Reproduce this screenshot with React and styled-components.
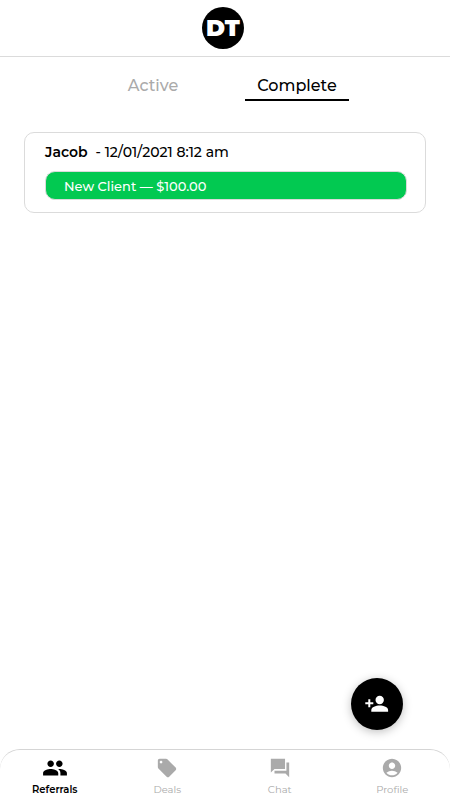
import React, { useState } from "react";
import styled, { createGlobalStyle } from "styled-components";
import { MdPeople, MdLocalOffer, MdAccountCircle } from "react-icons/md";

const GlobalStyle = createGlobalStyle`
  *, *::before, *::after { box-sizing: border-box; }
  body {
    margin: 0;
    background: #fff;
    color: #000;
    font-family: Montserrat, Inter, "Liberation Sans", sans-serif;
  }
  button { font: inherit; cursor: pointer; }
`;

const Screen = styled.div`
  display: flex;
  flex-direction: column;
  min-height: 100vh;
`;

const Header = styled.header`
  display: flex;
  justify-content: center;
  padding: 7px 0;
  border-bottom: 1px solid #dbdbdb;
`;

const Logo = styled.div`
  display: flex;
  align-items: center;
  justify-content: center;
  width: 42px;
  height: 42px;
  margin-right: 4px;
  border-radius: 50%;
  background: #000;
  color: #fff;
  font-size: 23px;
  font-weight: 900;
  line-height: 24px;
`;

const Tabs = styled.div`
  display: flex;
  justify-content: center;
  gap: 40px;
  padding-top: 14px;
`;

const Tab = styled.button`
  width: 104px;
  height: 30px;
  padding: 2px 0 0;
  border: 0;
  border-bottom: 2px solid ${({ $active }) => ($active ? "#000" : "transparent")};
  background: none;
  color: ${({ $active }) => ($active ? "#000" : "#aaa")};
  font-size: 16px;
  font-weight: 500;
  line-height: 26px;
`;

const List = styled.main`
  flex: 1;
  padding: 31px 24px 24px;
`;

const Card = styled.article`
  padding: 9px 18px 12px 20px;
  border: 1px solid #dbdbdb;
  border-radius: 10px;
`;

const CardTitle = styled.div`
  display: flex;
  gap: 8px;
  margin-bottom: 9px;
  font-size: 14px;
  font-weight: 500;
  line-height: 20px;
`;

const Name = styled.strong`
  font-weight: 600;
`;

const Status = styled.div`
  padding: 1px 18px 0;
  border: 1px solid #dbdbdb;
  border-radius: 10px;
  background: #02c951;
  color: #fff;
  font-size: 13px;
  font-weight: 500;
  line-height: 26px;
`;

const AddButton = styled.button`
  position: fixed;
  right: 47px;
  bottom: 70px;
  display: flex;
  align-items: center;
  justify-content: center;
  width: 52px;
  height: 52px;
  padding: 0;
  border: 0;
  border-radius: 50%;
  background: #000;
  color: #fff;
  font-size: 24px;
  box-shadow: 0 2px 10px rgba(0, 0, 0, 0.25);
`;

const BottomNav = styled.nav`
  position: sticky;
  bottom: 0;
  display: grid;
  grid-template-columns: repeat(4, 1fr);
  height: 51px;
  padding-top: 5px;
  border-top: 1px solid #d5d5d5;
  border-radius: 20px 20px 0 0;
  background: #fff;
`;

const NavItem = styled.a`
  display: flex;
  flex-direction: column;
  align-items: center;
  gap: 4px;
  padding-right: 3px;
  color: ${({ $active }) => ($active ? "#000" : "#aaa")};
  text-decoration: none;
`;

const NavIcon = styled.span`
  display: flex;
  align-items: center;
  height: 25px;
  font-size: ${({ $size }) => $size}px;
`;

const NavLabel = styled.span`
  font-size: 10px;
  line-height: 12px;
  font-weight: ${({ $active }) => ($active ? 600 : 400)};
`;

const ChatIcon = () => (
  <svg viewBox="0 0 24 24" width="1em" height="1em" fill="currentColor" aria-hidden="true">
    <path d="M2 2h15.5v11H6l-4 4z" />
    <path d="M19 6h3v16l-4-4H6v-3h13z" />
  </svg>
);

const PersonAddIcon = () => (
  <svg viewBox="0 0 24 24" width="1em" height="1em" fill="currentColor" aria-hidden="true">
    <path d="M3.3 7.2h2v3h3v2h-3v3h-2v-3h-3v-2h3z" />
    <circle cx="14.7" cy="8" r="4.2" />
    <path d="M6.3 19.8v-1.7c0-3 4.5-4.6 8.4-4.6s8.4 1.6 8.4 4.6v1.7z" />
  </svg>
);

const navItems = [
  { label: "Referrals", Icon: MdPeople, size: 26 },
  { label: "Deals", Icon: MdLocalOffer, size: 22 },
  { label: "Chat", Icon: ChatIcon, size: 22 },
  { label: "Profile", Icon: MdAccountCircle, size: 22 },
];

export default function App() {
  const [tab, setTab] = useState("Complete");

  return (
    <Screen>
      <GlobalStyle />
      <Header>
        <Logo>DT</Logo>
      </Header>
      <Tabs role="tablist">
        {["Active", "Complete"].map((name) => (
          <Tab
            key={name}
            type="button"
            role="tab"
            aria-selected={tab === name}
            $active={tab === name}
            onClick={() => setTab(name)}
          >
            {name}
          </Tab>
        ))}
      </Tabs>
      <List>
        <Card>
          <CardTitle>
            <Name>Jacob</Name>
            <span>- 12/01/2021 8:12 am</span>
          </CardTitle>
          <Status>New Client — $100.00</Status>
        </Card>
      </List>
      <AddButton type="button" aria-label="Add referral">
        <PersonAddIcon />
      </AddButton>
      <BottomNav>
        {navItems.map(({ label, Icon, size }, i) => (
          <NavItem key={label} href={`#${label.toLowerCase()}`} $active={i === 0}>
            <NavIcon $size={size}>
              <Icon />
            </NavIcon>
            <NavLabel $active={i === 0}>{label}</NavLabel>
          </NavItem>
        ))}
      </BottomNav>
    </Screen>
  );
}
